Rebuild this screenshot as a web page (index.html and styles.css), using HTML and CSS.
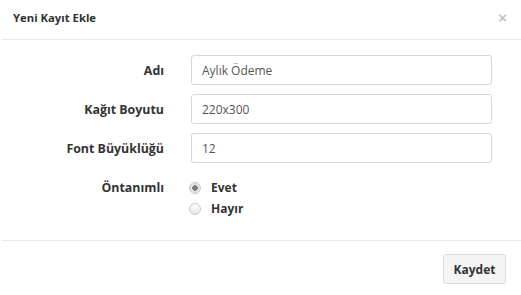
FILE: index.html
```html
<!DOCTYPE html>
<html lang="tr">
<head>
    <meta charset="UTF-8">
    <meta name="viewport" content="width=device-width, initial-scale=1.0">
    <title>Yeni Kayıt Ekle</title>

    <link rel="stylesheet" href="styles.css">
</head>
<body>
    <div class="modal">
        <div class="modal-header">
            <h4 class="modal-title">Yeni Kayıt Ekle</h4>
            <button type="button" class="close">&times;</button>
        </div>
        <form class="modal-body">
            <div class="form-row">
                <label class="control-label" for="adi">Adı</label>
                <input id="adi" class="form-control" type="text" value="Aylık Ödeme">
            </div>
            <div class="form-row">
                <label class="control-label" for="kagit">Kağıt Boyutu</label>
                <input id="kagit" class="form-control" type="text" value="220x300">
            </div>
            <div class="form-row">
                <label class="control-label" for="font">Font Büyüklüğü</label>
                <input id="font" class="form-control" type="text" value="12">
            </div>
            <div class="form-row radio-row">
                <span class="control-label">Öntanımlı</span>
                <div class="radio-group">
                    <label class="radio"><input type="radio" name="ontanimli" checked> Evet</label>
                    <label class="radio"><input type="radio" name="ontanimli"> Hayır</label>
                </div>
            </div>
        </form>
        <div class="modal-footer">
            <button type="button" class="btn">Kaydet</button>
        </div>
    </div>
</body>
</html>
```

FILE: styles.css
```css
body {
    margin: 0;
    font-family: "Open Sans", "Liberation Sans", sans-serif;
    font-size: 12px;
    color: #333333;
    background-color: #ffffff;
}

.modal {
    width: 521px;
    height: 295px;
    overflow: hidden;
}

.modal-header {
    display: flex;
    justify-content: space-between;
    align-items: center;
    height: 40px;
    margin-left: 2px;
    padding: 0 14px 5px 11px;
    border-bottom: 1px solid #e9e9e9;
    box-sizing: border-box;
}

.modal-title {
    margin: 0;
    font-size: 11.3px;
    font-weight: bold;
    color: #333333;
}

.close {
    border: 0;
    background: none;
    padding: 0;
    font-size: 15px;
    line-height: 1;
    color: #c4c4c4;
    font-family: "Liberation Sans", sans-serif;
    font-weight: bold;
}

.modal-body {
    display: flex;
    flex-direction: column;
    gap: 9px;
    height: 200px;
    margin: 0;
    padding: 15px 29px 0 14px;
    box-sizing: border-box;
}

.form-row {
    display: grid;
    grid-template-columns: 150px 1fr;
    column-gap: 27px;
    align-items: center;
}

.control-label {
    text-align: right;
    font-size: 12.4px;
    font-weight: bold;
}

.form-control {
    height: 30px;
    padding: 0 10px;
    border: 1px solid #d6d6d6;
    border-radius: 3px;
    box-sizing: border-box;
    font-family: inherit;
    font-size: 12px;
    color: #555555;
    background-color: #ffffff;
}

.radio-row {
    margin-top: 5px;
    align-items: start;
}

.radio-row .control-label {
    line-height: 21px;
}

.radio-group {
    display: flex;
    flex-direction: column;
}

.radio {
    display: flex;
    align-items: center;
    gap: 10px;
    height: 21px;
    margin-left: -2px;
    font-weight: bold;
}

.radio input {
    appearance: none;
    width: 12px;
    height: 12px;
    margin: 0;
    border: 1px solid #c8c8c8;
    border-radius: 50%;
    background: linear-gradient(#ffffff, #e6e6e6);
}

.radio input:checked {
    background: radial-gradient(circle, #7a7a7a 0 2.5px, #e4e4e4 3px);
}

.modal-footer {
    display: flex;
    justify-content: flex-end;
    margin-left: 2px;
    padding: 13px 15px 0 0;
    border-top: 1px solid #e9e9e9;
}

.btn {
    width: 63px;
    height: 30px;
    border: 1px solid #dcdcdc;
    border-radius: 3px;
    background-color: #f4f4f4;
    font-family: inherit;
    font-size: 12px;
    font-weight: bold;
    color: #333333;
}
```
